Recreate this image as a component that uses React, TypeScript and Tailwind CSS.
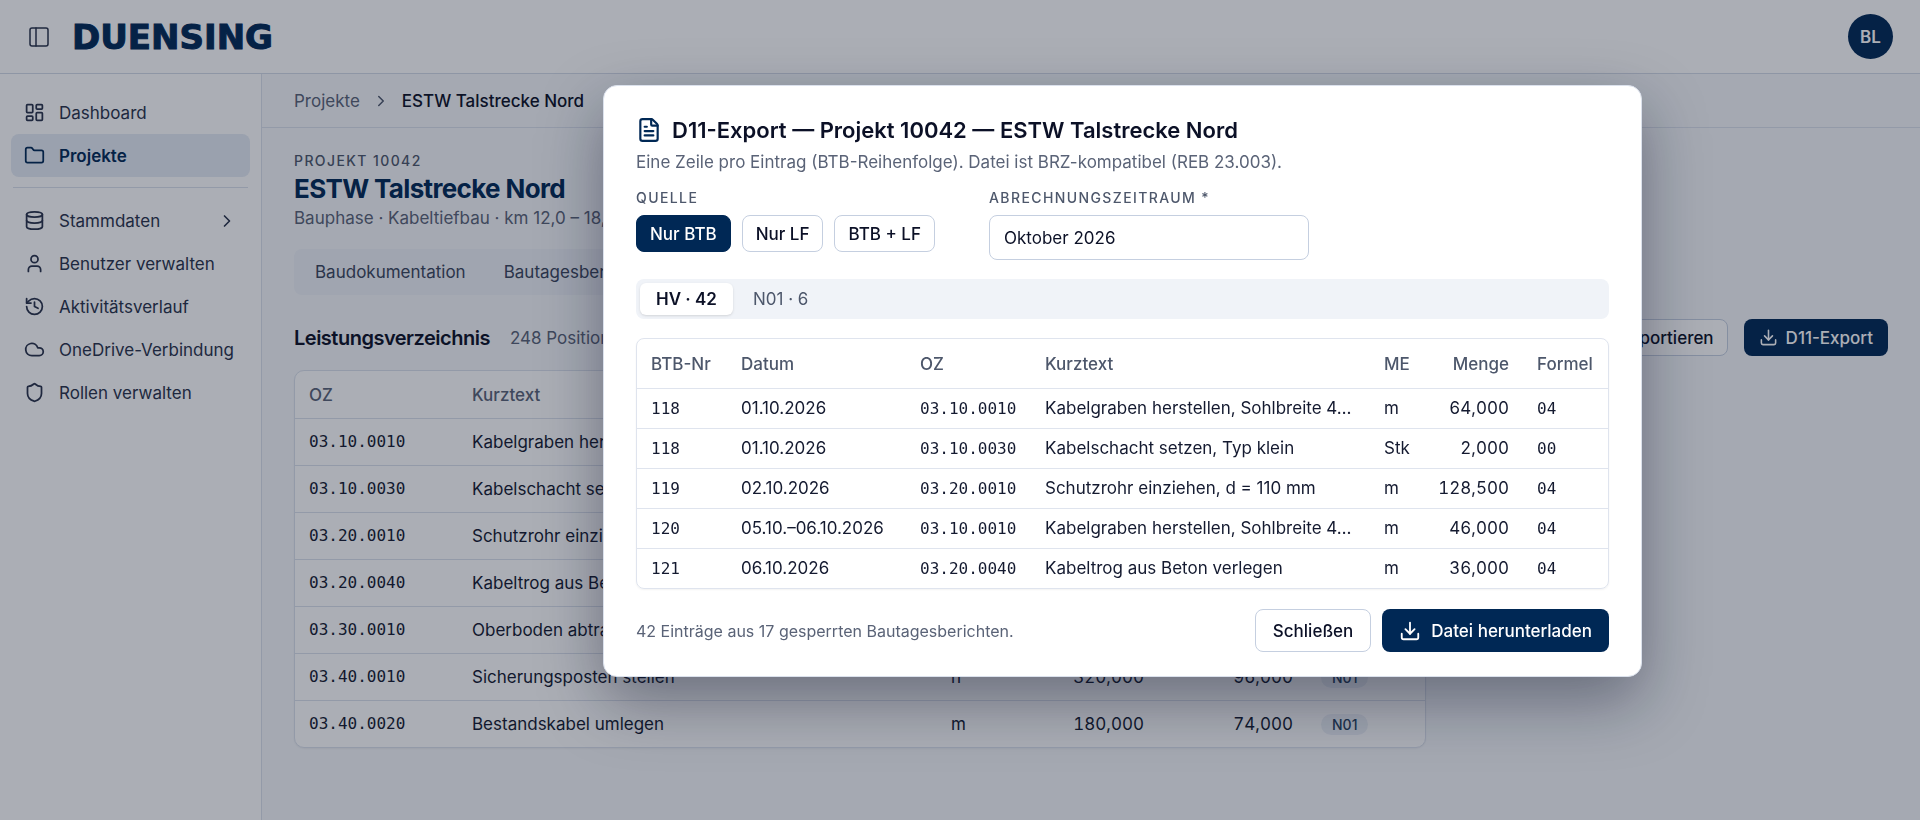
import { FunctionComponent, type ReactNode } from "react";
import {
  ChevronRight,
  Cloud,
  Database,
  Download,
  FileText,
  Folder,
  History,
  LayoutDashboard,
  PanelLeft,
  Shield,
  User,
  type LucideIcon,
} from "lucide-react";

type NavEntry = {
  label: string;
  icon: LucideIcon;
  active?: boolean;
  expandable?: boolean;
};

const mainNav: NavEntry[] = [
  { label: "Dashboard", icon: LayoutDashboard },
  { label: "Projekte", icon: Folder, active: true },
];

const adminNav: NavEntry[] = [
  { label: "Stammdaten", icon: Database, expandable: true },
  { label: "Benutzer verwalten", icon: User },
  { label: "Aktivitätsverlauf", icon: History },
  { label: "OneDrive-Verbindung", icon: Cloud },
  { label: "Rollen verwalten", icon: Shield },
];

const positions = [
  { oz: "03.10.0010", text: "Kabelgraben herstellen", me: "m", soll: "640,000", ist: "310,000", lv: "HV" },
  { oz: "03.10.0030", text: "Kabelschacht setzen", me: "Stk", soll: "24,000", ist: "12,000", lv: "HV" },
  { oz: "03.20.0010", text: "Schutzrohr einziehen", me: "m", soll: "980,000", ist: "428,500", lv: "HV" },
  { oz: "03.20.0040", text: "Kabeltrog aus Beton", me: "m", soll: "450,000", ist: "136,000", lv: "HV" },
  { oz: "03.30.0010", text: "Oberboden abtragen", me: "m²", soll: "720,000", ist: "260,000", lv: "HV" },
  { oz: "03.40.0010", text: "Sicherungsposten stellen", me: "h", soll: "320,000", ist: "96,000", lv: "N01" },
  { oz: "03.40.0020", text: "Bestandskabel umlegen", me: "m", soll: "180,000", ist: "74,000", lv: "N01" },
];

const entries = [
  { nr: "118", date: "01.10.2026", oz: "03.10.0010", text: "Kabelgraben herstellen, Sohlbreite 4…", me: "m", qty: "64,000", formula: "04" },
  { nr: "118", date: "01.10.2026", oz: "03.10.0030", text: "Kabelschacht setzen, Typ klein", me: "Stk", qty: "2,000", formula: "00" },
  { nr: "119", date: "02.10.2026", oz: "03.20.0010", text: "Schutzrohr einziehen, d = 110 mm", me: "m", qty: "128,500", formula: "04" },
  { nr: "120", date: "05.10.–06.10.2026", oz: "03.10.0010", text: "Kabelgraben herstellen, Sohlbreite 4…", me: "m", qty: "46,000", formula: "04" },
  { nr: "121", date: "06.10.2026", oz: "03.20.0040", text: "Kabeltrog aus Beton verlegen", me: "m", qty: "36,000", formula: "04" },
];

const NavItem: FunctionComponent<{ entry: NavEntry }> = ({ entry }) => {
  const Icon = entry.icon;
  return (
    <a
      href="#"
      className={`flex h-[43px] items-center gap-3.5 rounded-lg px-[13px] whitespace-nowrap ${
        entry.active
          ? "bg-[#e5ebf4] font-semibold text-[#002855]"
          : "text-[#29324a]"
      }`}
    >
      <Icon className="size-[21px] shrink-0" />
      <span className="flex-1">{entry.label}</span>
      {entry.expandable && <ChevronRight className="size-5 shrink-0" />}
    </a>
  );
};

const Mono: FunctionComponent<{ children: ReactNode }> = ({ children }) => (
  <span className="font-['DejaVu_Sans_Mono',monospace] text-base">
    {children}
  </span>
);

const Sidebar: FunctionComponent = () => (
  <aside className="w-[262px] shrink-0 border-r border-[#dbe1ec] bg-white px-[11px] pt-[17px]">
    <nav>
      {mainNav.map((entry) => (
        <NavItem key={entry.label} entry={entry} />
      ))}
      <hr className="mx-0.5 mt-2.5 mb-[11px] border-[#dbe1ec]" />
      {adminNav.map((entry) => (
        <NavItem key={entry.label} entry={entry} />
      ))}
    </nav>
  </aside>
);

const PositionsTable: FunctionComponent = () => (
  <div className="mt-3.5 max-w-[1132px] overflow-hidden rounded-[10px] border border-[#dbe1ec] bg-white shadow-xs">
    <table className="w-full table-fixed text-left text-[#141a30]">
      <colgroup>
        <col className="w-[163px]" />
        <col />
        <col className="w-[60px]" />
        <col className="w-[161px]" />
        <col className="w-[149px]" />
        <col className="w-[118px]" />
      </colgroup>
      <thead>
        <tr className="h-[47px] text-[#5a6377]">
          <th className="px-3.5 pt-0.5 font-medium">OZ</th>
          <th className="px-3.5 pt-0.5 font-medium">Kurztext</th>
          <th className="px-3.5 pt-0.5 font-medium">ME</th>
          <th className="px-3.5 pt-0.5 text-right font-medium">Soll</th>
          <th className="px-3.5 pt-0.5 text-right font-medium">Ist</th>
          <th className="px-3.5 pt-0.5 font-medium">LV</th>
        </tr>
      </thead>
      <tbody>
        {positions.map((p) => (
          <tr key={p.oz} className="h-[47px] border-t border-[#dbe1ec]">
            <td className="px-3.5"><Mono>{p.oz}</Mono></td>
            <td className="px-3.5">{p.text}</td>
            <td className="px-3.5">{p.me}</td>
            <td className="px-3.5 text-right tabular-nums">{p.soll}</td>
            <td className="px-3.5 text-right tabular-nums">{p.ist}</td>
            <td className="px-3.5">
              <span className="rounded-full bg-[#edf1f7] px-[11px] py-0.5 text-sm font-medium text-[#29415f]">
                {p.lv}
              </span>
            </td>
          </tr>
        ))}
      </tbody>
    </table>
  </div>
);

const ExportDialog: FunctionComponent = () => (
  <div
    role="dialog"
    aria-modal="true"
    aria-labelledby="export-title"
    className="w-full max-w-[1039px] rounded-[14px] border border-[#dbe1ec] bg-white px-8 pt-8 pb-6 shadow-[0_24px_64px_rgba(10,16,40,0.4)]"
  >
    <h2
      id="export-title"
      className="flex h-6 items-center gap-2.5 text-[22px] font-semibold text-[#0b1026]"
    >
      <FileText className="size-[26px] text-[#002855]" />
      D11-Export — Projekt 10042 — ESTW Talstrecke Nord
    </h2>
    <p className="mt-[9px] leading-[23px] text-[#5a6377]">
      Eine Zeile pro Eintrag (BTB-Reihenfolge). Datei ist BRZ-kompatibel (REB
      23.003).
    </p>

    <div className="mt-[15px] flex items-start gap-[54px]">
      <div role="group" aria-labelledby="source-label">
        <div
          id="source-label"
          className="text-sm leading-[18px] font-medium tracking-widest text-[#4d576b]"
        >
          QUELLE
        </div>
        <div className="mt-2 flex gap-[11px] font-medium text-[#0b1026]">
          <button className="h-[37px] rounded-lg border border-[#002855] bg-[#002855] px-[13px] text-white">
            Nur BTB
          </button>
          <button className="h-[37px] rounded-lg border border-[#c5cfe0] px-[13px]">
            Nur LF
          </button>
          <button className="h-[37px] rounded-lg border border-[#c5cfe0] px-[13px]">
            BTB + LF
          </button>
        </div>
      </div>
      <div>
        <label
          htmlFor="period"
          className="block text-sm leading-[18px] font-medium tracking-widest text-[#4d576b]"
        >
          ABRECHNUNGSZEITRAUM *
        </label>
        <input
          id="period"
          type="text"
          defaultValue="Oktober 2026"
          className="mt-2 block h-[45px] w-80 rounded-lg border border-[#c5cfe0] bg-white px-3.5 text-[#0b1026]"
        />
      </div>
    </div>

    <div
      role="tablist"
      className="mt-[19px] flex h-10 items-center gap-1 rounded-lg bg-[#f0f3f8] p-1"
    >
      <button
        role="tab"
        aria-selected="true"
        className="h-8 rounded-md bg-white px-4 font-semibold text-[#0b1026] shadow-sm"
      >
        HV · 42
      </button>
      <button
        role="tab"
        aria-selected="false"
        className="h-8 rounded-md px-4 text-[#4d576b]"
      >
        N01 · 6
      </button>
    </div>

    <div className="mt-[19px] overflow-hidden rounded-lg border border-[#dfe4ee] shadow-xs">
      <table className="w-full table-fixed text-left text-[#141a30]">
        <colgroup>
          <col className="w-[90px]" />
          <col className="w-[179px]" />
          <col className="w-[125px]" />
          <col />
          <col className="w-[55px]" />
          <col className="w-[98px]" />
          <col className="w-[85px]" />
        </colgroup>
        <thead>
          <tr className="h-[49px] text-[#4d576b]">
            <th className="pt-0.5 pl-3.5 font-medium">BTB-Nr</th>
            <th className="px-3.5 pt-0.5 font-medium">Datum</th>
            <th className="px-3.5 pt-0.5 font-medium">OZ</th>
            <th className="px-3.5 pt-0.5 font-medium">Kurztext</th>
            <th className="px-3.5 pt-0.5 font-medium">ME</th>
            <th className="px-3.5 pt-0.5 text-right font-medium">Menge</th>
            <th className="pt-0.5 pl-3.5 font-medium">Formel</th>
          </tr>
        </thead>
        <tbody>
          {entries.map((e, i) => (
            <tr key={i} className="h-10 border-t border-[#dfe4ee]">
              <td className="px-3.5"><Mono>{e.nr}</Mono></td>
              <td className="pl-3.5 whitespace-nowrap">{e.date}</td>
              <td className="pl-3.5"><Mono>{e.oz}</Mono></td>
              <td className="truncate px-3.5">{e.text}</td>
              <td className="pl-3.5">{e.me}</td>
              <td className="pr-3.5 text-right tabular-nums">{e.qty}</td>
              <td className="px-3.5"><Mono>{e.formula}</Mono></td>
            </tr>
          ))}
        </tbody>
      </table>
    </div>

    <div className="mt-5 flex items-center gap-[11px] font-medium">
      <p className="flex-1 text-base font-normal text-[#5a6377]">
        42 Einträge aus 17 gesperrten Bautagesberichten.
      </p>
      <button className="h-[43px] rounded-lg border border-[#c5cfe0] px-[17px] text-[#0b1026]">
        Schließen
      </button>
      <button className="flex h-[43px] items-center gap-2.5 rounded-lg bg-[#002855] px-[17px] text-white">
        <Download className="size-[22px]" />
        Datei herunterladen
      </button>
    </div>
  </div>
);

const App: FunctionComponent = () => {
  return (
    <div className="flex min-h-screen flex-col bg-[#f6f8fb] font-['Inter',sans-serif] text-[17px] leading-6">
      <header className="flex h-[74px] shrink-0 items-center border-b border-[#d3dae6] bg-white px-[27px]">
        <button aria-label="Seitenleiste umschalten" className="text-[#29324a]">
          <PanelLeft className="size-6" strokeWidth={1.5} />
        </button>
        <div className="ml-[21px] flex-1 font-['DejaVu_Sans',sans-serif] text-[34px] leading-10 font-bold text-[#002855] [-webkit-text-stroke:1px_#002855]">
          DUENSING
        </div>
        <button className="size-[45px] rounded-full bg-[#002855] font-semibold text-white">
          BL
        </button>
      </header>

      <div className="flex flex-1">
        <Sidebar />
        <main className="min-w-0 flex-1">
          <nav
            aria-label="Brotkrumen"
            className="flex h-[54px] items-center gap-3 border-b border-[#dbe1ec] px-8"
          >
            <a href="#" className="text-[#5a6377]">
              Projekte
            </a>
            <ChevronRight className="size-[18px] text-[#4d576b]" />
            <span className="font-medium text-[#0b1026]">
              ESTW Talstrecke Nord
            </span>
          </nav>

          <div className="px-8 pt-6 pb-8">
            <div className="text-sm leading-[18px] font-medium tracking-widest text-[#4d576b]">
              PROJEKT 10042
            </div>
            <h1 className="text-[26px] leading-[38px] font-bold tracking-tight text-[#002855]">
              ESTW Talstrecke Nord
            </h1>
            <p className="leading-5 text-[#5a6377]">
              Bauphase · Kabeltiefbau · km 12,0 – 18,4
            </p>

            <div
              role="tablist"
              className="mt-[21px] flex h-[46px] w-fit items-center rounded-lg bg-[#eef1f7] px-0.5 text-[#3a455c]"
            >
              <button role="tab" className="px-[19px]">
                Baudokumentation
              </button>
              <button role="tab" className="px-[19px]">
                Bautagesberichte
              </button>
            </div>

            <div className="mt-6 flex h-[37px] items-center gap-4">
              <div className="flex flex-1 items-center gap-5">
                <h2 className="text-xl font-semibold tracking-tight text-[#0b1026]">
                  Leistungsverzeichnis
                </h2>
                <span className="text-[#5a6377]">248 Positionen</span>
              </div>
              <button className="h-full rounded-lg border border-[#c5cfe0] bg-white px-[13px] font-medium text-[#0b1026]">
                Exportieren
              </button>
              <button className="flex h-full items-center gap-2 rounded-lg bg-[#002855] px-[15px] font-medium text-white">
                <Download className="size-[19px]" />
                D11-Export
              </button>
            </div>

            <PositionsTable />
          </div>
        </main>
      </div>

      <div className="fixed inset-0 flex items-start justify-end bg-[#0f172a]/35 pt-[85px] pr-[278px]">
        <ExportDialog />
      </div>
    </div>
  );
};

export default App;
